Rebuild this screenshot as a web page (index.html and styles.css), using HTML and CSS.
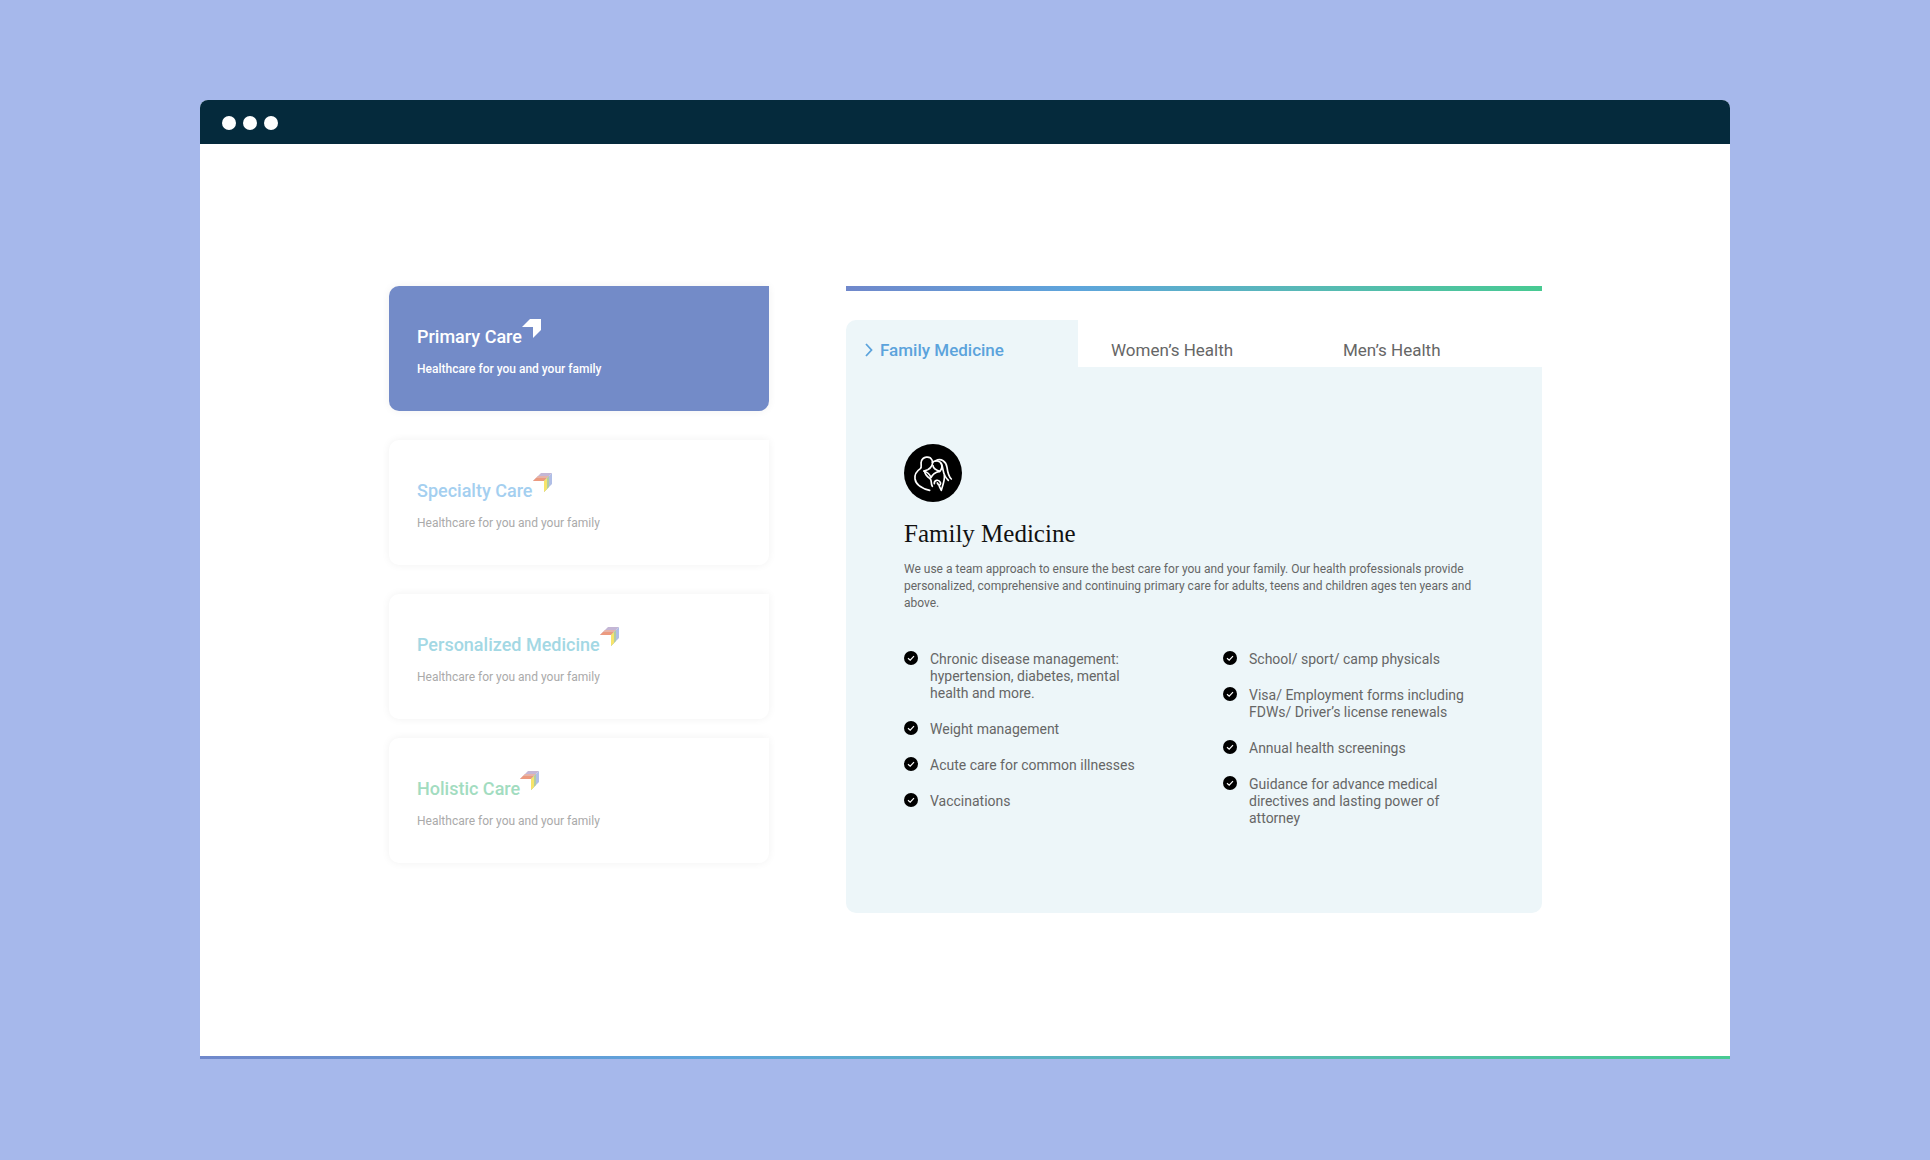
FILE: index.html
```html
<!DOCTYPE html>
<html lang="en">
<head>
    <meta charset="UTF-8">
    <meta name="viewport" content="width=device-width, initial-scale=1.0">
    <title>Our Services</title>
    <link rel="stylesheet" href="styles.css">
</head>
<body>
    <!-- shared shapes -->
    <svg class="sprite" aria-hidden="true">
        <symbol id="arrow-color" viewBox="0 0 19 19">
            <path d="M0 8 L8 0 H19 L11 8 Z" fill="#ac98c4"/>
            <path d="M0 8 L3 5 H14 L11 8 Z" fill="#e5704a"/>
            <path d="M3 5 L5 3 H16 L14 5 Z" fill="#dc9484"/>
            <path d="M11 8 L19 0 V11 L11 19 Z" fill="#8fa3dc"/>
            <path d="M11 8 L16 3 V14 L11 19 Z" fill="#93b878"/>
            <path d="M11 8 L14 5 V16 L11 19 Z" fill="#f5d92c"/>
        </symbol>
        <symbol id="check" viewBox="0 0 14 14">
            <circle cx="7" cy="7" r="7" fill="#000"/>
            <path d="M4 7.2 L6.2 9.2 L10 5.2" fill="none" stroke="#fff" stroke-width="1.2"/>
        </symbol>
    </svg>

    <div class="window">
        <header class="window-bar">
            <span class="dot"></span>
            <span class="dot"></span>
            <span class="dot"></span>
        </header>

        <main class="content">
            <nav class="cards">
                <button class="card active">
                    <span class="card-title">Primary Care<svg class="arrow" viewBox="0 0 19 19"><path d="M0 8 L8 0 H19 V11 L11 19 V8 Z" fill="#fff"/></svg></span>
                    <span class="card-text">Healthcare for you and your family</span>
                </button>
                <button class="card specialty">
                    <span class="card-title">Specialty Care<svg class="arrow"><use href="#arrow-color"/></svg></span>
                    <span class="card-text">Healthcare for you and your family</span>
                </button>
                <button class="card personalized">
                    <span class="card-title">Personalized Medicine<svg class="arrow"><use href="#arrow-color"/></svg></span>
                    <span class="card-text">Healthcare for you and your family</span>
                </button>
                <button class="card holistic">
                    <span class="card-title">Holistic Care<svg class="arrow"><use href="#arrow-color"/></svg></span>
                    <span class="card-text">Healthcare for you and your family</span>
                </button>
            </nav>

            <section class="services">
                <div class="tabs" role="tablist">
                    <button class="tab active" role="tab" aria-selected="true"><svg class="chevron" viewBox="0 0 8 14"><path d="M1 1 L6.5 7 L1 13" fill="none" stroke="currentColor" stroke-width="1.8"/></svg>Family Medicine</button>
                    <button class="tab" role="tab" aria-selected="false">Women’s Health</button>
                    <button class="tab" role="tab" aria-selected="false">Men’s Health</button>
                </div>

                <div class="panel" role="tabpanel">
                    <svg class="family-icon" viewBox="72 42 174 174">
                        <circle cx="159" cy="129" r="87" fill="#000"/>
                        <g fill="none" stroke="#fff" stroke-width="5" stroke-linecap="round" stroke-linejoin="round">
                            <path d="M149 181 C130 177 108 166 105 147 C103 132 112 122 121 116 C127 111 121 103 124 94 C128 80 149 76 156 90 C161 101 154 114 143 119 L132 123"/>
                            <path d="M132 123 C144 127 149 132 153 143 C157 133 164 127 179 124 C167 120 160 116 159 107"/>
                            <path d="M157 98 C164 90 180 91 184 102 C188 111 184 119 179 124"/>
                            <path d="M167 92 C184 84 198 94 201 112 C203 127 205 139 214 147"/>
                            <path d="M184 100 C190 114 188 129 196 140 C199 145 202 148 205 151"/>
                            <path d="M134 124 C135 134 142 140 150 146 C157 152 151 160 157 169"/>
                            <path d="M193 137 C195 150 188 166 184 181 L178 169"/>
                            <path d="M163 161 C162 150 176 147 181 157 C183 162 180 166 176 165 L172 159"/>
                        </g>
                    </svg>
                    <h2>Family Medicine</h2>
                    <p class="description">We use a team approach to ensure the best care for you and your family. Our health professionals provide personalized, comprehensive and continuing primary care for adults, teens and children ages ten years and above.</p>

                    <div class="lists">
                        <ul>
                            <li><svg class="check"><use href="#check"/></svg>Chronic disease management: hypertension, diabetes, mental health and more.</li>
                            <li><svg class="check"><use href="#check"/></svg>Weight management</li>
                            <li><svg class="check"><use href="#check"/></svg>Acute care for common illnesses</li>
                            <li><svg class="check"><use href="#check"/></svg>Vaccinations</li>
                        </ul>
                        <ul>
                            <li><svg class="check"><use href="#check"/></svg>School/ sport/ camp physicals</li>
                            <li><svg class="check"><use href="#check"/></svg>Visa/ Employment forms including FDWs/ Driver’s license renewals</li>
                            <li><svg class="check"><use href="#check"/></svg>Annual health screenings</li>
                            <li><svg class="check"><use href="#check"/></svg>Guidance for advance medical directives and lasting power of attorney</li>
                        </ul>
                    </div>
                </div>
            </section>
        </main>
    </div>
</body>
</html>
```
FILE: styles.css
```css
* {
    box-sizing: border-box;
}

body {
    margin: 0;
    padding: 100px 200px;
    min-height: 100vh;
    display: flex;
    align-items: flex-start;
    font-family: Roboto, "Liberation Sans", sans-serif;
    background-color: #a6b8eb;
    color: #666;
}

button {
    border: none;
    background: none;
    padding: 0;
    margin: 0;
    font-family: inherit;
    color: inherit;
    text-align: left;
    cursor: pointer;
}

.sprite {
    position: absolute;
    width: 0;
    height: 0;
}

.window {
    flex: 1;
    background-color: #fff;
    border-radius: 8px 8px 0 0;
    border-bottom: 3px solid;
    border-image: linear-gradient(to right, #7088cb, #5ea5dc 33%, #58b9b6 66%, #48ca92) 1;
}

.window-bar {
    display: flex;
    align-items: center;
    gap: 7px;
    height: 44px;
    padding: 2px 22px 0;
    background-color: #052a3c;
    border-radius: 8px 8px 0 0;
}

.dot {
    width: 14px;
    height: 14px;
    border-radius: 50%;
    background-color: #fff;
}

.content {
    display: grid;
    grid-template-columns: 380fr 696fr;
    gap: 77px;
    padding: 142px 188px 143px 189px;
}

/* left cards */
.cards {
    display: flex;
    flex-direction: column;
}

.card {
    display: flex;
    flex-direction: column;
    gap: 12px;
    height: 125px;
    padding: 33px 28px;
    margin-bottom: 29px;
    border-radius: 10px 0 10px 10px;
    background-color: #fff;
    box-shadow: 0 0 8px rgba(0, 0, 0, 0.06);
}

.card.personalized {
    margin-bottom: 19px;
}

.card-title {
    display: flex;
    align-items: flex-start;
    font-size: 18px;
    font-weight: 500;
    line-height: 24px;
    padding-top: 6px;
}

.card-text {
    font-size: 12px;
    line-height: 16px;
    color: #aaa;
}

.arrow {
    width: 19px;
    height: 19px;
    margin-top: -6px;
    opacity: 0.7;
}

.card.active {
    background-color: #738bc8;
    color: #fff;
}

.card.active .card-text {
    color: #fff;
    font-weight: 500;
}

.card.active .arrow {
    opacity: 1;
}

.specialty {
    color: #a4cff0;
}

.personalized {
    color: #a3d8e4;
}

.holistic {
    color: #a2dcc0;
}

/* right side */
.services::before {
    content: "";
    display: block;
    height: 5px;
    margin-bottom: 29px;
    background: linear-gradient(to right, #7088cb, #5ea5dc 33%, #58b9b6 66%, #48ca92);
}

.tabs {
    display: grid;
    grid-template-columns: repeat(3, 1fr);
}

.tab {
    display: flex;
    align-items: center;
    height: 47px;
    padding: 12px 0 0 33px;
    font-size: 17px;
}

.tab.active {
    padding-left: 19px;
    gap: 7px;
    border-radius: 10px 0 0 0;
    background-color: #edf6f9;
    color: #5ba3dc;
    font-weight: 500;
}

.chevron {
    width: 8px;
    height: 14px;
}

.panel {
    padding: 77px 57px 86px 58px;
    border-radius: 0 0 10px 10px;
    background-color: #edf6f9;
}

.family-icon {
    display: block;
    width: 58px;
    height: 58px;
}

h2 {
    margin: 16px 0 11px;
    font-family: "Liberation Serif", serif;
    font-size: 25px;
    font-weight: 400;
    line-height: 32px;
    color: #111;
}

.description {
    margin: 0 0 39px;
    font-size: 12px;
    line-height: 17px;
}

.lists {
    display: grid;
    grid-template-columns: 1fr 1fr;
    gap: 57px;
}

.lists ul {
    display: flex;
    flex-direction: column;
    gap: 19px;
    margin: 0;
    padding: 0;
    list-style: none;
}

.lists li {
    display: flex;
    gap: 12px;
    padding-right: 12px;
    font-size: 14px;
    line-height: 17px;
}

.check {
    flex: none;
    width: 14px;
    height: 14px;
}
```
